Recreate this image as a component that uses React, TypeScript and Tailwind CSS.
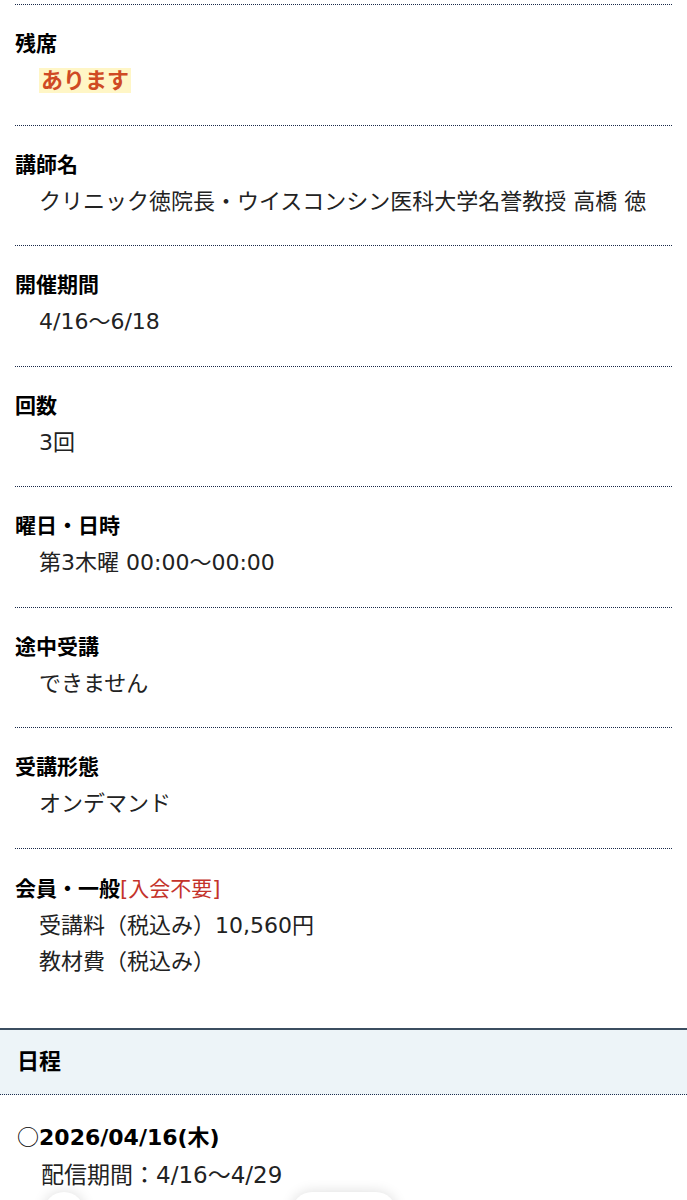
const jp = "font-['DejaVu_Sans','Noto_Sans_CJK_JP',sans-serif]";

type Row = {
  title: React.ReactNode;
  values: React.ReactNode[];
};

const rows: Row[] = [
  {
    title: "残席",
    values: [
      <span className="bg-[#fff6c6] px-[2px] font-bold text-[#cf4a24]">あります</span>,
    ],
  },
  {
    title: "講師名",
    values: ["クリニック徳院長・ウイスコンシン医科大学名誉教授 高橋 徳"],
  },
  { title: "開催期間", values: ["4/16〜6/18"] },
  { title: "回数", values: ["3回"] },
  { title: "曜日・日時", values: ["第3木曜 00:00〜00:00"] },
  { title: "途中受講", values: ["できません"] },
  { title: "受講形態", values: ["オンデマンド"] },
  {
    title: (
      <>
        会員・一般<span className="font-normal text-[#c4332b]">[入会不要]</span>
      </>
    ),
    values: ["受講料（税込み）10,560円", "教材費（税込み）"],
  },
];

export default function App() {
  return (
    <div className={`relative min-h-[1200px] overflow-hidden bg-white pt-[4px] text-[20px] text-[#222] ${jp}`}>
      <div className="mx-[15px]">
        {rows.map((row, i) => (
          <InfoRow key={i} row={row} last={i === rows.length - 1} />
        ))}
      </div>

      <section className="mt-[23px]">
        <h2 className="flex h-[67px] items-center border-t-2 border-b border-t-[#3b4e60] border-b-[#1f3050] border-dotted bg-[#edf4f8] px-[17px] text-[22px] font-bold text-black [border-top-style:solid]">
          日程
        </h2>
        <div className="px-[17px] pt-[23px]">
          <p className="text-[22px] leading-[34px] font-bold text-black">
            <span className="font-['Noto_Sans_CJK_JP',sans-serif] font-normal">○</span>
            2026/04/16(木)
          </p>
          <p className="mt-[2px] pl-[24px] text-[23px] leading-[36px] text-[#222]">配信期間：4/16〜4/29</p>
        </div>
      </section>

      <div className="absolute top-[1192px] left-[44px] h-[40px] w-[40px] rounded-full bg-white shadow-[0_0_14px_rgba(0,0,0,0.14)]" />
      <div className="absolute top-[1192px] left-[292px] h-[40px] w-[104px] rounded-[20px] bg-white shadow-[0_0_14px_rgba(0,0,0,0.14)]" />
    </div>
  );
}

function InfoRow({ row, last }: { row: Row; last: boolean }) {
  return (
    <div
      className={
        last
          ? "border-t border-dotted border-[#1a2a4a] pt-[24px] pb-[25px]"
          : "border-t border-dotted border-[#1a2a4a] pt-[23px] pb-[25.5px]"
      }
    >
      <p className="text-[21px] leading-[32px] font-bold text-black">{row.title}</p>
      <div className="mt-[3px] pl-[24px]">
        {row.values.map((v, i) => (
          <p key={i} className="text-[22px] leading-[36px] text-[#222]">
            {v}
          </p>
        ))}
      </div>
    </div>
  );
}
